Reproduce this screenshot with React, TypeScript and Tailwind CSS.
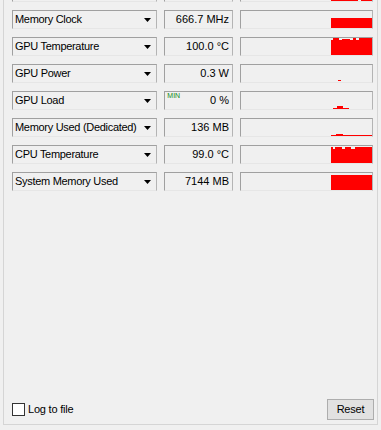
import React from 'react'

type Rect = [number, number, number, number]

// first row is scrolled out of view, only its bottom edge shows
const sensors: { name: string; value: string; min?: boolean; bars: Rect[] }[] = [
  { name: '', value: '', bars: [[90, 15, 27, 2], [120, 15, 11, 2]] },
  { name: 'Memory Clock', value: '666.7 MHz', bars: [[90, 7, 41, 10]] },
  {
    name: 'GPU Temperature',
    value: '100.0 °C',
    bars: [[90, 2, 41, 15], [92, 0, 6, 2], [101, 1, 8, 1], [112, 0, 3, 2], [118, 0, 13, 2]],
  },
  { name: 'GPU Power', value: '0.3 W', bars: [[97, 15, 3, 1]] },
  { name: 'GPU Load', value: '0 %', min: true, bars: [[92, 16, 4, 1], [96, 14, 6, 3], [102, 16, 6, 1]] },
  { name: 'Memory Used (Dedicated)', value: '136 MB', bars: [[90, 16, 41, 1], [95, 15, 7, 1]] },
  {
    name: 'CPU Temperature',
    value: '99.0 °C',
    bars: [[90, 3, 41, 14], [90, 1, 2, 2], [94, 1, 7, 2], [104, 1, 6, 2], [114, 1, 17, 2]],
  },
  { name: 'System Memory Used', value: '7144 MB', bars: [[90, 2, 41, 15]] },
]

// sunken win32-style field
const field = 'h-[19px] border border-t-[#a0a0a0] border-l-[#a0a0a0] border-r-[#b4b4b4] border-b-[#e6e6e6] bg-[#f0f0f0]'

function Graph({ bars }: { bars: Rect[] }) {
  return (
    <div className={`${field} w-[133px]`}>
      <svg width="131" height="17" viewBox="0 0 131 17" className="block">
        {bars.map((b, i) => (
          <rect key={i} x={b[0]} y={b[1]} width={b[2]} height={b[3]} fill="#ff0000" />
        ))}
      </svg>
    </div>
  )
}

export default function App() {
  return (
    <div
      className="w-[381px] h-[430px] overflow-hidden bg-[#f0f0f0] px-[3px] text-[11px] text-black"
      style={{ fontFamily: '"Liberation Sans", Arial, sans-serif' }}
    >
      <div className="h-[425px] border border-t-0 border-[#d5d5d5] flex flex-col">
        <div className="mt-[-17px] flex flex-col gap-[8px] pl-[8px] pr-[4px]">
          {sensors.map((s, i) => (
            <div key={i} className="flex items-center gap-[7px]">
              <div className={`${field} w-[146px] flex items-center justify-between pl-[2px] pr-[5px]`}>
                <span className="tracking-[-0.3px] whitespace-nowrap">{s.name}</span>
                <svg width="7" height="4" viewBox="0 0 7 4" className="block shrink-0">
                  <polygon points="0,0 7,0 3.5,4" fill="#000" />
                </svg>
              </div>
              <div className={`${field} w-[69px] relative flex items-center justify-end pr-[3px]`}>
                {s.min && (
                  <span className="absolute left-[2px] top-0 text-[7px] leading-none text-[#138a13]">MIN</span>
                )}
                <span className="whitespace-nowrap">{s.value}</span>
              </div>
              <Graph bars={s.bars} />
            </div>
          ))}
        </div>
        <div className="flex-1" />
        <div className="flex items-center justify-between pl-[8px] pr-[3px] pb-[4px]">
          <label className="flex items-center gap-[3px] tracking-[-0.2px]">
            <span className="w-[13px] h-[13px] border border-[#333333] bg-white block" />
            Log to file
          </label>
          <button className="w-[47px] h-[21px] bg-[#e1e1e1] border border-[#adadad] tracking-[-0.2px]">Reset</button>
        </div>
      </div>
    </div>
  )
}
